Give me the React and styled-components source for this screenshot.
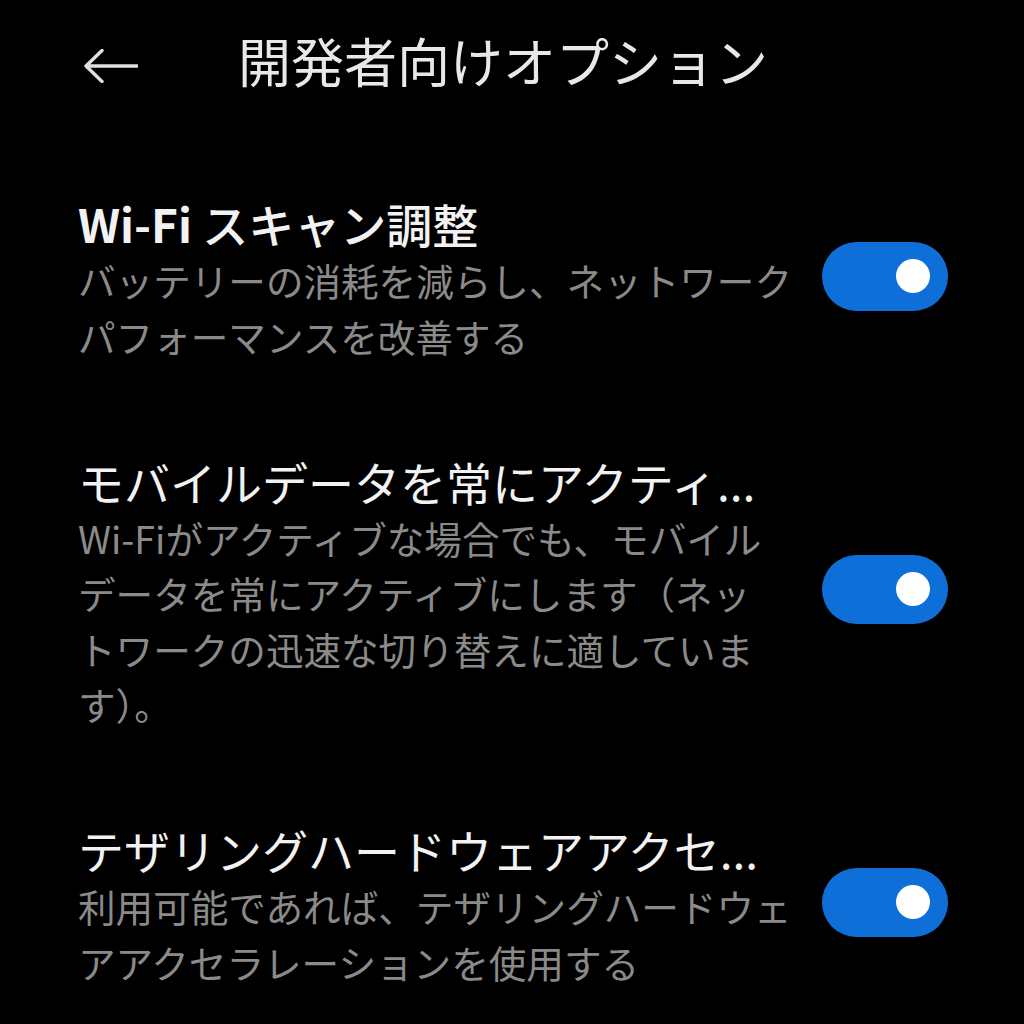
import React from "react";
import styled, { createGlobalStyle } from "styled-components";

const Global = createGlobalStyle`
  html, body {
    margin: 0;
    padding: 0;
    background: #000;
  }
  body {
    width: 1024px;
    height: 1024px;
    overflow: hidden;
    font-family: "Noto Sans CJK JP", "Noto Sans", sans-serif;
  }
`;

const Screen = styled.div`
  width: 1024px;
  height: 1024px;
  background: #000;
  color: #f0f0f0;
  display: flex;
  flex-direction: column;
`;

const Header = styled.header`
  height: 120px;
  display: flex;
  align-items: center;
  padding-left: 84px;
  gap: 100px;
`;

const BackButton = styled.button`
  width: 54px;
  height: 34px;
  margin-top: 12px;
  padding: 0;
  border: 0;
  background: transparent;
  display: flex;
  align-items: center;
  justify-content: center;
`;

const HeaderTitle = styled.h1`
  margin: 0;
  font-size: 53px;
  line-height: 60px;
  font-weight: 400;
  color: #e8e8e8;
  white-space: nowrap;
`;

const List = styled.div`
  display: flex;
  flex-direction: column;
  gap: 88.5px;
  padding: 74px 76px 0 78px;
`;

const Row = styled.div`
  display: flex;
  align-items: center;
  gap: 22px;
`;

const TextBlock = styled.div`
  flex: 1;
  min-width: 0;
  display: flex;
  flex-direction: column;
`;

const Title = styled.div`
  font-size: 46px;
  line-height: 58px;
  font-weight: ${(p) => (p.$strong ? 500 : 400)};
  color: #f2f2f2;
  white-space: nowrap;
`;

const Bold = styled.span`
  font-weight: 700;
`;

const Desc = styled.div`
  font-size: 37.6px;
  line-height: 55.5px;
  color: #8a8a8a;
`;

const Line = styled.span`
  display: block;
  white-space: nowrap;
`;

const Track = styled.div`
  flex: none;
  width: 126px;
  height: 69px;
  margin-bottom: 5px;
  border-radius: 35px;
  background: ${(p) => (p.$on ? "#0f6fd8" : "#444")};
  display: flex;
  align-items: center;
  justify-content: ${(p) => (p.$on ? "flex-end" : "flex-start")};
  padding: 0 18px;
  box-sizing: border-box;
`;

const Knob = styled.div`
  width: 34px;
  height: 34px;
  border-radius: 50%;
  background: #ffffff;
`;

const ArrowIcon = () => (
  <svg width="54" height="34" viewBox="0 0 54 34" fill="none">
    <path
      d="M53 17 H2 M18 1.5 L2 17 L18 32.5"
      stroke="#e0e0e0"
      strokeWidth="3.4"
      strokeLinecap="round"
      strokeLinejoin="round"
    />
  </svg>
);

const items = [
  {
    title: (
      <>
        <Bold>Wi-Fi</Bold> スキャン調整
      </>
    ),
    strong: true,
    lines: ["バッテリーの消耗を減らし、ネットワーク", "パフォーマンスを改善する"],
  },
  {
    title: "モバイルデータを常にアクティ...",
    lines: [
      "Wi-Fiがアクティブな場合でも、モバイル",
      "データを常にアクティブにします（ネッ",
      "トワークの迅速な切り替えに適していま",
      "す）。",
    ],
  },
  {
    title: "テザリングハードウェアアクセ...",
    lines: ["利用可能であれば、テザリングハードウェ", "アアクセラレーションを使用する"],
  },
];

export default function App() {
  return (
    <Screen>
      <Global />
      <Header>
        <BackButton aria-label="戻る">
          <ArrowIcon />
        </BackButton>
        <HeaderTitle>開発者向けオプション</HeaderTitle>
      </Header>
      <List>
        {items.map((it, i) => (
          <Row key={i}>
            <TextBlock>
              <Title $strong={it.strong}>{it.title}</Title>
              <Desc>
                {it.lines.map((l, j) => (
                  <Line key={j}>{l}</Line>
                ))}
              </Desc>
            </TextBlock>
            <Track $on>
              <Knob />
            </Track>
          </Row>
        ))}
      </List>
    </Screen>
  );
}
